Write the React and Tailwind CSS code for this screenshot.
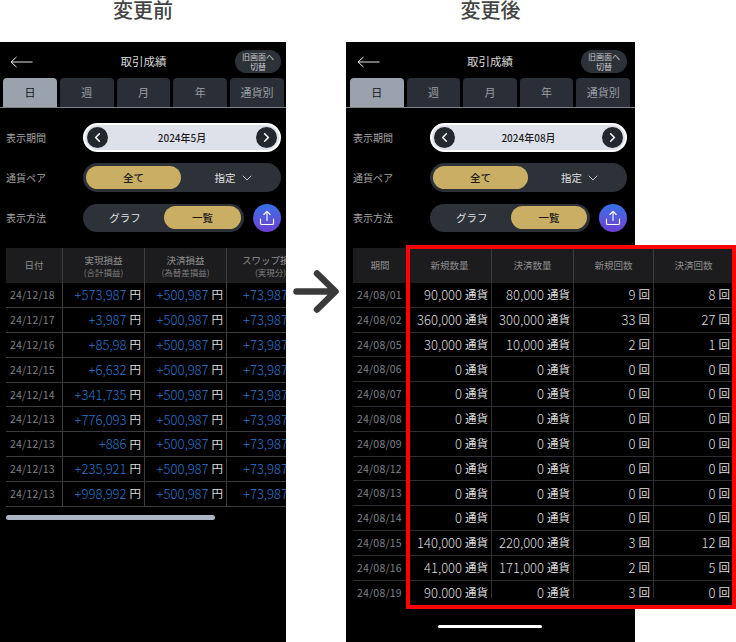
import React from 'react';
import { ChevronLeft, ChevronRight, ChevronDown } from 'lucide-react';

const JP = '[font-family:"Noto_Sans_CJK_JP","Noto_Sans",sans-serif]';

const beforeRows = [
  ['24/12/18', '+573,987'],
  ['24/12/17', '+3,987'],
  ['24/12/16', '+85,98'],
  ['24/12/15', '+6,632'],
  ['24/12/14', '+341,735'],
  ['24/12/13', '+776,093'],
  ['24/12/13', '+886'],
  ['24/12/13', '+235,921'],
  ['24/12/13', '+998,992'],
];

const afterRows = [
  ['24/08/01', '90,000', '80,000', '9', '8'],
  ['24/08/02', '360,000', '300,000', '33', '27'],
  ['24/08/05', '30,000', '10,000', '2', '1'],
  ['24/08/06', '0', '0', '0', '0'],
  ['24/08/07', '0', '0', '0', '0'],
  ['24/08/08', '0', '0', '0', '0'],
  ['24/08/09', '0', '0', '0', '0'],
  ['24/08/12', '0', '0', '0', '0'],
  ['24/08/13', '0', '0', '0', '0'],
  ['24/08/14', '0', '0', '0', '0'],
  ['24/08/15', '140,000', '220,000', '3', '12'],
  ['24/08/16', '41,000', '171,000', '2', '5'],
  ['24/08/19', '90,000', '0', '3', '0'],
];

const tabs = ['日', '週', '月', '年', '通貨別'];

const BackArrow = () => (
  <svg width="23" height="12" viewBox="0 0 23 12" fill="none" stroke="#e5e5e5" strokeWidth="1">
    <path d="M22.5 6H1M6.5 1L1 6L6.5 11" />
  </svg>
);

const UploadIcon = () => (
  <svg width="16" height="16" viewBox="0 0 16 16" fill="none" stroke="#ffffff" strokeWidth="1.1" strokeLinecap="round" strokeLinejoin="round">
    <path d="M8 10.5V1.5M4.8 4.5L8 1.3L11.2 4.5" />
    <path d="M1.5 9V13.2C1.5 14 2 14.5 2.8 14.5H13.2C14 14.5 14.5 14 14.5 13.2V9" />
  </svg>
);

const Controls = ({ month, tabRow, controlRow }) => (
  <>
    <div className={`flex items-start justify-between h-[36px] pt-[8px] ${controlRow}`}>
      <div className="w-[46px] h-[23px] pl-[4px] flex items-center"><BackArrow /></div>
      <div className="h-[23px] flex items-center text-[11.5px] text-[#d8d8d8]">取引成績</div>
      <div className="w-[46px] h-[23px] rounded-full bg-[#2d3138] flex items-center justify-center text-center text-[8px] leading-[9.5px] text-[#c8c8c8]">
        旧画面へ<br />切替
      </div>
    </div>
    <div className={`flex gap-[3px] border-b border-[#7d8186] h-[30px] ${tabRow}`}>
      {tabs.map((t, i) => (
        <div
          key={t}
          className={`flex-1 rounded-t-[4px] flex items-center justify-center text-[11px] ${i === 0 ? 'bg-[#9aa3ad] text-[#141414]' : 'bg-[#2a2f37] text-[#9a9da2]'}`}
        >
          {t}
        </div>
      ))}
    </div>
    <div className={`pt-[15px] flex flex-col gap-[11px] ${controlRow}`}>
      <div className="flex items-center h-[29px]">
        <div className="w-[77px] text-[10px] text-[#a5a5a5]">表示期間</div>
        <div className="flex-1 h-[29px] rounded-full bg-[#dfe1ea] border-2 border-white flex items-center justify-between px-[2px]">
          <div className="w-[21px] h-[21px] rounded-full bg-[#23282f] flex items-center justify-center">
            <ChevronLeft size={15} strokeWidth={2.5} color="#ffffff" />
          </div>
          <div className="text-[10px] font-medium text-[#1d1d1f]">{month}</div>
          <div className="w-[21px] h-[21px] rounded-full bg-[#23282f] flex items-center justify-center">
            <ChevronRight size={15} strokeWidth={2.5} color="#ffffff" />
          </div>
        </div>
      </div>
      <div className="flex items-center h-[29px]">
        <div className="w-[77px] text-[10px] text-[#a5a5a5]">通貨ペア</div>
        <div className="flex-1 h-[29px] rounded-full bg-[#2d3138] p-[3px] flex items-center">
          <div className="w-[95px] h-[23px] rounded-full bg-[#c9ae64] flex items-center justify-center text-[10.5px] font-medium text-[#1a1a1a]">全て</div>
          <div className="flex-1 flex items-center justify-center gap-[3px] pl-[10px] text-[10.5px] text-[#e0e0e0]">
            指定 <ChevronDown size={16} strokeWidth={1.3} color="#e0e0e0" />
          </div>
        </div>
      </div>
      <div className="flex items-center h-[29px]">
        <div className="w-[77px] text-[10px] text-[#a5a5a5]">表示方法</div>
        <div className="w-[161px] h-[28px] rounded-full bg-[#2d3138] p-[3px] flex items-center">
          <div className="w-[78px] flex items-center justify-center text-[10.5px] text-[#e0e0e0]">グラフ</div>
          <div className="flex-1 h-[23px] rounded-full bg-[#c9ae64] flex items-center justify-center text-[10.5px] font-medium text-[#1a1a1a]">一覧</div>
        </div>
        <div className="ml-[9px] w-[28px] h-[28px] rounded-full bg-gradient-to-b from-[#2f6fe8] to-[#6a3fd0] flex items-center justify-center">
          <UploadIcon />
        </div>
      </div>
    </div>
  </>
);

const HeadCell = ({ title, sub, first }) => (
  <div className={`h-[35px] bg-[#1c1c1e] flex flex-col items-center justify-center whitespace-nowrap overflow-hidden ${first ? '' : 'border-l border-[#3a3d42]'}`}>
    <div className="text-[9.5px] leading-[13px] text-[#8f8f8f]">{title}</div>
    {sub && <div className="text-[8.5px] leading-[11px] text-[#7e7e7e]">{sub}</div>}
  </div>
);

const DateCell = ({ children, row }) => (
  <div className={`${row} border-b flex items-center pl-[4px] text-[10.5px] text-[#7f8084] tracking-[0.2px]`}>{children}</div>
);

const ValueCell = ({ value, unit, blue, cut, row }) => (
  <div className={`${row} border-b border-l flex items-center gap-[3px] pr-[3px] whitespace-nowrap ${cut ? 'pl-[16px] justify-start overflow-hidden' : 'justify-end'}`}>
    <span className={`text-[13px] font-light ${blue ? 'text-[#2a76cc]' : 'text-[#dedede]'}`}>{value}</span>
    <span className="text-[11.5px] text-[#dedede]">{unit}</span>
  </div>
);

const BeforeTable = () => {
  const row = 'h-[24.89px] border-[#3a3c40]';
  return (
    <div className="ml-[6px] mt-[16px] w-[280px] overflow-hidden">
      <div className="grid grid-cols-[56px_82px_82px_88px] w-[308px]">
        <HeadCell title="日付" first />
        <HeadCell title="実現損益" sub="(合計損益)" />
        <HeadCell title="決済損益" sub="(為替差損益)" />
        <HeadCell title="スワップ損益" sub="(実現分)" />
        {beforeRows.map(([date, pl], i) => (
          <React.Fragment key={i}>
            <DateCell row={row}>{date}</DateCell>
            <ValueCell row={row} value={pl} unit="円" blue />
            <ValueCell row={row} value="+500,987" unit="円" blue />
            <ValueCell row={row} value="+73,987" unit="円" blue cut />
          </React.Fragment>
        ))}
      </div>
      <div className="mt-[8px] w-[209px] h-[5px] rounded-full bg-[#aab4c4]" />
    </div>
  );
};

const AfterTable = () => {
  const row = 'h-[24.8px] border-[#2c2e33]';
  return (
    <div className="relative mt-[13px] w-[390px] h-[360px] bg-black pt-[3px] pl-[7px]">
      <div className="h-[350px] w-[380px] overflow-hidden">
        <div className="grid grid-cols-[54px_84px_82px_80px_80px]">
          <HeadCell title="期間" first />
          <HeadCell title="新規数量" />
          <HeadCell title="決済数量" />
          <HeadCell title="新規回数" />
          <HeadCell title="決済回数" />
          {afterRows.map(([date, a, b, c, d], i) => (
            <React.Fragment key={i}>
              <DateCell row={row}>{date}</DateCell>
              <ValueCell row={row} value={a} unit="通貨" />
              <ValueCell row={row} value={b} unit="通貨" />
              <ValueCell row={row} value={c} unit="回" />
              <ValueCell row={row} value={d} unit="回" />
            </React.Fragment>
          ))}
        </div>
      </div>
      {/* 赤枠 */}
      <div className="absolute left-[60px] top-0 w-[330px] h-[364px] border-4 border-[#ff0000] pointer-events-none" />
    </div>
  );
};

const Heading = ({ children }) => (
  <div className="h-[42px] text-center text-[20px] leading-[20px] font-medium text-[#444444]">{children}</div>
);

export default function App() {
  return (
    <div className={`w-[736px] h-[642px] bg-white overflow-hidden flex ${JP}`}>
      <div className="w-[286px] shrink-0">
        <Heading>変更前</Heading>
        <div className="h-[600px] bg-black overflow-hidden">
          <Controls month="2024年5月" tabRow="pl-[3px] pr-[2px]" controlRow="pl-[6px] pr-[5px]" />
          <BeforeTable />
        </div>
      </div>
      <div className="w-[60px] shrink-0 pt-[270px] pl-[7px]">
        <svg width="46" height="43" viewBox="0 0 46 43" fill="none" stroke="#3a3a3a" strokeWidth="6.5" strokeLinecap="round" strokeLinejoin="round">
          <path d="M3.5 21.5H42M24 3.5L42.5 21.5L24 39.5" />
        </svg>
      </div>
      <div className="w-[289px] shrink-0">
        <Heading>変更後</Heading>
        <div className="h-[600px] bg-black relative">
          <Controls month="2024年08月" tabRow="pl-[4px] pr-[5px]" controlRow="pl-[7px] pr-[8px]" />
          <AfterTable />
          <div className="absolute bottom-[14px] left-[92px] w-[104px] h-[3px] rounded-full bg-white" />
        </div>
      </div>
    </div>
  );
}
